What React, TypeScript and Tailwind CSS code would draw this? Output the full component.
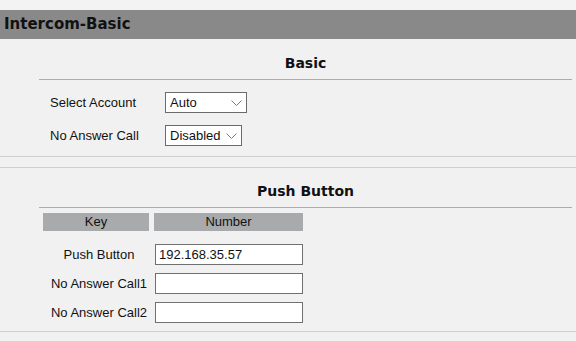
const body = "font-['Liberation_Sans',Arial,sans-serif]";
const bold = "font-['DejaVu_Sans',Verdana,sans-serif] font-bold";

function Chevron() {
  return (
    <svg width="11" height="6" viewBox="0 0 11 6" className="shrink-0">
      <path d="M0.5 0.5 L5.5 5.5 L10.5 0.5" fill="none" stroke="#7a7a7a" strokeWidth="1" />
    </svg>
  );
}

function Select({ value, width }: { value: string; width: string }) {
  return (
    <div
      className={`flex h-[21px] items-center justify-between border border-[#6b6b6b] bg-white pl-[4px] pr-[4px] text-[13px] text-[#111] ${width}`}
    >
      <span>{value}</span>
      <Chevron />
    </div>
  );
}

function SectionTitle({ title, height }: { title: string; height: string }) {
  return (
    <div
      className={`ml-[39px] mr-[4px] flex items-end justify-center border-b border-[#8db2e2] pb-[5px] text-[14px] text-[#111] ${bold} ${height}`}
    >
      {title}
    </div>
  );
}

const keys = [
  { label: "Push Button", value: "192.168.35.57" },
  { label: "No Answer Call1", value: "" },
  { label: "No Answer Call2", value: "" },
];

export default function App() {
  return (
    <div className={`h-[341px] w-[576px] overflow-hidden bg-[#f1f1f1] ${body}`}>
      <div className="h-[10px] bg-[#f3f3f3]" />
      <div className={`flex h-[29px] items-center bg-[#898989] pl-[4px] text-[15px] text-[#111] ${bold}`}>
        Intercom-Basic
      </div>

      {/* Basic */}
      <SectionTitle title="Basic" height="h-[41px]" />
      <div className="flex flex-col gap-[12px] pt-[12px] text-[13px] text-[#111]">
        <div className="flex items-center">
          <span className="w-[165px] pl-[50px] whitespace-nowrap">Select Account</span>
          <Select value="Auto" width="w-[82px]" />
        </div>
        <div className="flex items-center">
          <span className="w-[165px] pl-[50px] whitespace-nowrap">No Answer Call</span>
          <Select value="Disabled" width="w-[77px]" />
        </div>
      </div>
      <div className="mt-[10px] h-[12px] border-y border-[#cfcfcf]" />

      {/* Push Button */}
      <SectionTitle title="Push Button" height="h-[40px]" />
      <div className="pl-[43px] pt-[5px] text-[13px] text-[#111]">
        <div className="flex h-[18px] gap-[5px]">
          <div className="flex w-[106px] items-center justify-center bg-[#a9aaac]">Key</div>
          <div className="flex w-[149px] items-center justify-center bg-[#a9aaac]">Number</div>
        </div>
        <div className="flex flex-col gap-[8px] pt-[13px]">
          {keys.map((k) => (
            <div key={k.label} className="flex items-center">
              <span className="w-[112px] text-center whitespace-nowrap">{k.label}</span>
              <div className="flex h-[21px] w-[148px] items-center border border-[#707070] bg-white pl-[3px]">
                {k.value}
              </div>
            </div>
          ))}
        </div>
      </div>
      <div className="mt-[8px] border-t border-[#cfcfcf]" />
    </div>
  );
}
